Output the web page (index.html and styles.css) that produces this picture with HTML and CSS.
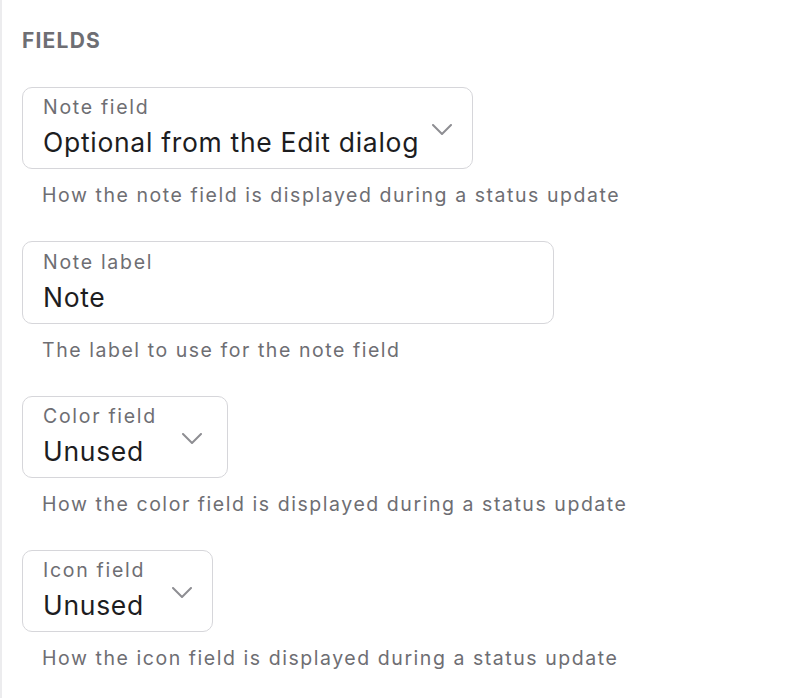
FILE: index.html
```html
<!DOCTYPE html>
<html lang="en">
<head>
<meta charset="utf-8">
<title>Fields</title>
<link rel="stylesheet" href="styles.css">
</head>
<body>
<section class="panel">
  <h2 class="section-title">FIELDS</h2>

  <div class="field">
    <div class="box select w-note">
      <div class="box-content">
        <div class="box-label">Note field</div>
        <div class="box-value">Optional from the Edit dialog</div>
      </div>
      <svg class="chevron" viewBox="0 0 20 11" width="20" height="11"><path d="M1 1l9 9 9-9" fill="none" stroke="currentColor" stroke-width="2" stroke-linecap="round" stroke-linejoin="round"/></svg>
    </div>
    <div class="helper">How the note field is displayed during a status update</div>
  </div>

  <div class="field">
    <div class="box input w-label">
      <div class="box-content">
        <div class="box-label">Note label</div>
        <div class="box-value">Note</div>
      </div>
    </div>
    <div class="helper">The label to use for the note field</div>
  </div>

  <div class="field">
    <div class="box select w-color">
      <div class="box-content">
        <div class="box-label">Color field</div>
        <div class="box-value">Unused</div>
      </div>
      <svg class="chevron" viewBox="0 0 20 11" width="20" height="11"><path d="M1 1l9 9 9-9" fill="none" stroke="currentColor" stroke-width="2" stroke-linecap="round" stroke-linejoin="round"/></svg>
    </div>
    <div class="helper">How the color field is displayed during a status update</div>
  </div>

  <div class="field">
    <div class="box select w-icon">
      <div class="box-content">
        <div class="box-label">Icon field</div>
        <div class="box-value">Unused</div>
      </div>
      <svg class="chevron" viewBox="0 0 20 11" width="20" height="11"><path d="M1 1l9 9 9-9" fill="none" stroke="currentColor" stroke-width="2" stroke-linecap="round" stroke-linejoin="round"/></svg>
    </div>
    <div class="helper">How the icon field is displayed during a status update</div>
  </div>
</section>
</body>
</html>
```

FILE: styles.css
```css
html, body {
  margin: 0;
  padding: 0;
  background: #ffffff;
}

body {
  font-family: Inter, "Noto Sans", "Liberation Sans", sans-serif;
  color: #1d1d1f;
}

.panel {
  box-sizing: border-box;
  min-height: 698px;
  border-left: 2px solid #ececee;
  padding: 29px 0 0 20px;
}

.section-title {
  margin: 0 0 34px 0;
  font-size: 21px;
  line-height: 24px;
  font-weight: 700;
  letter-spacing: 1.2px;
  color: #6e6e73;
}

.field {
  margin-bottom: 34px;
}

.box {
  box-sizing: border-box;
  display: flex;
  align-items: center;
  justify-content: space-between;
  height: 82px;
  border: 1px solid #d6d6da;
  border-radius: 10px;
  padding: 0 20px 0 20px;
}

.box.input {
  height: 83px;
}

.box-content {
  display: flex;
  flex-direction: column;
}

.box-label {
  font-size: 19.5px;
  line-height: 22px;
  color: #6e6e73;
  letter-spacing: 1.7px;
  margin-top: -3px;
}

.box-value {
  margin-top: 9px;
  font-size: 26.5px;
  line-height: 30px;
  color: #1d1d1f;
  letter-spacing: 0.7px;
}

.chevron {
  flex: none;
  color: #8e8e93;
  margin-top: 2px;
}

.w-note { width: 451px; }
.w-label { width: 532px; }
.w-color { width: 206px; padding-right: 25px; }
.w-icon { width: 191px; }

.helper {
  margin-top: 14px;
  padding-left: 20px;
  font-size: 19.5px;
  line-height: 24px;
  color: #6e6e73;
  letter-spacing: 1.55px;
}
```
